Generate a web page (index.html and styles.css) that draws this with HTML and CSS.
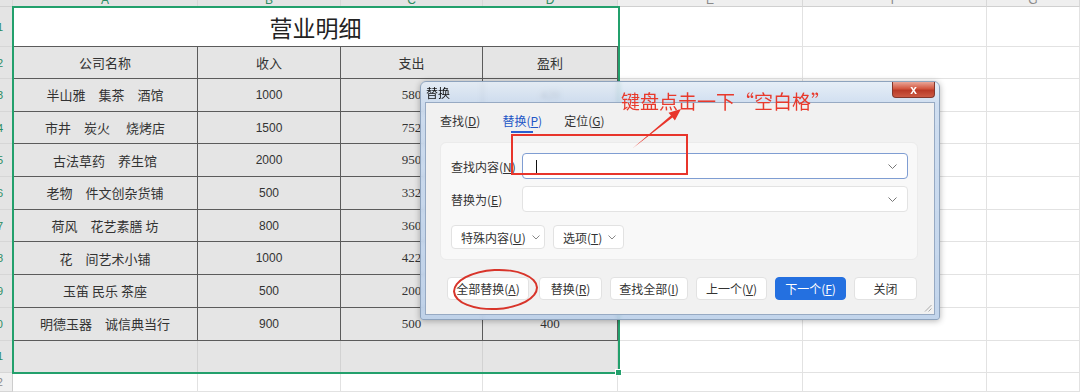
FILE: index.html
```html
<!DOCTYPE html>
<html lang="zh-CN">
<head>
    <meta charset="UTF-8">
    <title>营业明细 - 替换</title>
    <link rel="stylesheet" href="styles.css">
</head>
<body>
    <div class="sheet">
        <!-- column headers -->
        <div class="ch corner"></div>
        <div class="ch sel"><span>A</span></div>
        <div class="ch sel"><span>B</span></div>
        <div class="ch sel"><span>C</span></div>
        <div class="ch sel"><span>D</span></div>
        <div class="ch"><span>E</span></div>
        <div class="ch"><span>F</span></div>
        <div class="ch"><span>G</span></div>

        <!-- row 1 -->
        <div class="rh">1</div>
        <div class="title">营业明细</div>
        <div class="e"></div><div class="e"></div><div class="e"></div>

        <!-- row 2 -->
        <div class="rh">2</div>
        <div class="c">公司名称</div>
        <div class="c">收入</div>
        <div class="c">支出</div>
        <div class="c">盈利</div>
        <div class="e"></div><div class="e"></div><div class="e"></div>

        <div class="rh">3</div>
        <div class="c">半山雅　集茶　酒馆</div>
        <div class="c num">1000</div>
        <div class="c serif">580</div>
        <div class="c serif">420</div>
        <div class="e"></div><div class="e"></div><div class="e"></div>

        <div class="rh">4</div>
        <div class="c">市井　炭火　 烧烤店</div>
        <div class="c num">1500</div>
        <div class="c serif">752</div>
        <div class="c serif">748</div>
        <div class="e"></div><div class="e"></div><div class="e"></div>

        <div class="rh">5</div>
        <div class="c">古法草药　养生馆</div>
        <div class="c num">2000</div>
        <div class="c serif">950</div>
        <div class="c serif">1050</div>
        <div class="e"></div><div class="e"></div><div class="e"></div>

        <div class="rh">6</div>
        <div class="c">老物　件文创杂货铺</div>
        <div class="c num">500</div>
        <div class="c serif">332</div>
        <div class="c serif">168</div>
        <div class="e"></div><div class="e"></div><div class="e"></div>

        <div class="rh">7</div>
        <div class="c">荷风　花艺素膳 坊</div>
        <div class="c num">800</div>
        <div class="c serif">360</div>
        <div class="c serif">440</div>
        <div class="e"></div><div class="e"></div><div class="e"></div>

        <div class="rh">8</div>
        <div class="c">花　间艺术小铺</div>
        <div class="c num">1000</div>
        <div class="c serif">422</div>
        <div class="c serif">578</div>
        <div class="e"></div><div class="e"></div><div class="e"></div>

        <div class="rh">9</div>
        <div class="c">玉笛 民乐 茶座</div>
        <div class="c num">500</div>
        <div class="c serif">200</div>
        <div class="c serif">300</div>
        <div class="e"></div><div class="e"></div><div class="e"></div>

        <div class="rh">10</div>
        <div class="c">明德玉器　诚信典当行</div>
        <div class="c num">900</div>
        <div class="c serif">500</div>
        <div class="c serif">400</div>
        <div class="e"></div><div class="e"></div><div class="e"></div>

        <div class="rh">11</div>
        <div class="blank"></div><div class="blank"></div><div class="blank"></div><div class="blank"></div>
        <div class="e"></div><div class="e"></div><div class="e"></div>

        <div class="rh off">12</div>
        <div class="e"></div><div class="e"></div><div class="e"></div><div class="e"></div>
        <div class="e"></div><div class="e"></div><div class="e"></div>
    </div>

    <div class="selection"></div>

    <div class="dialog">
        <div class="dialog-title">替换</div>
        <div class="close">x</div>
        <div class="client">
            <div class="tabs">
                <div class="tab"><span>查找(<u>D</u>)</span></div>
                <div class="tab active"><span>替换(<u>P</u>)</span></div>
                <div class="tab"><span>定位(<u>G</u>)</span></div>
            </div>

            <div class="panel">
                <div class="field">
                    <label>查找内容(<u>N</u>)</label>
                    <div class="input focus">
                        <span class="caret"></span>
                        <svg class="chev" width="9" height="5" viewBox="0 0 9 5"><polyline points="0.5,0.5 4.5,4.5 8.5,0.5" fill="none" stroke="#777" stroke-width="1"/></svg>
                    </div>
                </div>
                <div class="field">
                    <label>替换为(<u>E</u>)</label>
                    <div class="input">
                        <span></span>
                        <svg class="chev" width="9" height="5" viewBox="0 0 9 5"><polyline points="0.5,0.5 4.5,4.5 8.5,0.5" fill="none" stroke="#777" stroke-width="1"/></svg>
                    </div>
                </div>
                <div class="options">
                    <div class="opt wide">
                        <span>特殊内容(<u>U</u>)</span>
                        <svg width="8" height="5" viewBox="0 0 8 5"><polyline points="0.5,0.5 4,4 7.5,0.5" fill="none" stroke="#888" stroke-width="1"/></svg>
                    </div>
                    <div class="opt">
                        <span>选项(<u>T</u>)</span>
                        <svg width="8" height="5" viewBox="0 0 8 5"><polyline points="0.5,0.5 4,4 7.5,0.5" fill="none" stroke="#888" stroke-width="1"/></svg>
                    </div>
                </div>
            </div>

            <div class="actions">
                <div class="btn all"><span>全部替换(<u>A</u>)</span></div>
                <div class="btn one"><span>替换(<u>R</u>)</span></div>
                <div class="btn find"><span>查找全部(<u>I</u>)</span></div>
                <div class="btn nav"><span>上一个(<u>V</u>)</span></div>
                <div class="btn nav primary"><span>下一个(<u>F</u>)</span></div>
                <div class="btn one"><span>关闭</span></div>
            </div>

            <svg class="grip" width="8" height="8" viewBox="0 0 8 8">
                <line x1="7.5" y1="1" x2="1" y2="7.5" stroke="#aaa"/>
                <line x1="7.5" y1="4.5" x2="4.5" y2="7.5" stroke="#aaa"/>
            </svg>
        </div>
    </div>

    <!-- red annotations -->
    <div class="note">键盘点击一下“空白格”</div>
    <div class="mark-box"></div>
    <div class="mark-ring"></div>
    <svg class="arrow" width="1080" height="392" viewBox="0 0 1080 392">
        <polygon points="633,148 670.9,115.6 668.5,112.7 681,109 674.9,120.5 672.5,117.6" fill="#e8352b"/>
    </svg>
</body>
</html>
```

FILE: styles.css
```css
* {
    margin: 0;
    padding: 0;
    box-sizing: border-box;
}

body {
    font-family: "Noto Sans CJK SC", "Noto Sans", sans-serif;
    background: #fff;
    color: #333;
    width: 1080px;
    height: 392px;
    overflow: hidden;
    position: relative;
}

u {
    text-decoration: underline;
    text-underline-offset: 1px;
}

/* spreadsheet */

.sheet {
    display: grid;
    grid-template-columns: 13px 185px 143px 142px 135px 185px 184px 1fr;
    grid-template-rows: 7px 40px 32px repeat(9, 32.7px) 1fr;
    height: 392px;
}

.ch {
    background: #efefef;
    border-right: 1px solid #d8d8d8;
    border-bottom: 1px solid #d0d0d0;
    overflow: hidden;
    text-align: center;
    font: 12px "Liberation Sans", sans-serif;
    color: #8a8a8a;
}

.ch span {
    display: block;
    line-height: 14px;
    margin-top: -7px;
}

.ch.sel {
    background: #e4e4e4;
    color: #2b8c62;
}

.ch.corner {
    background: #e4e4e4;
}

.rh {
    background: #e4e4e4;
    border-right: 1px solid #cdcdcd;
    border-bottom: 1px solid #d6d6d6;
    display: flex;
    align-items: center;
    justify-content: flex-end;
    padding-right: 9px;
    overflow: hidden;
    font: 11px "Liberation Sans", sans-serif;
    color: #2b8c62;
}

.rh.off {
    background: #efefef;
    color: #8a8a8a;
}

.title {
    grid-column: span 4;
    background: #fff;
    border-bottom: 1px solid #5b5b5b;
    display: flex;
    align-items: center;
    justify-content: center;
    font-size: 23px;
    color: #222;
}

.c {
    background: #e5e5e5;
    border-right: 1px solid #5b5b5b;
    border-bottom: 1px solid #5b5b5b;
    display: flex;
    align-items: center;
    justify-content: center;
    font-size: 13px;
    white-space: pre;
    color: #333;
}

.c.num {
    font: 12px "Liberation Sans", sans-serif;
}

.c.serif {
    font: 13px "Liberation Serif", serif;
}

.blank {
    background: #e5e5e5;
    border-right: 1px solid #d2d2d2;
}

.e {
    border-right: 1px solid #e2e2e2;
    border-bottom: 1px solid #e2e2e2;
}

.selection {
    position: absolute;
    left: 12px;
    top: 6px;
    width: 608px;
    height: 368px;
    border: 2px solid #23a06c;
    pointer-events: none;
}

.selection::after {
    content: "";
    position: absolute;
    right: -4px;
    bottom: -4px;
    width: 5px;
    height: 5px;
    background: #23a06c;
    border: 1px solid #fff;
}

/* replace dialog */

.dialog {
    position: absolute;
    left: 420px;
    top: 81px;
    width: 520px;
    height: 239px;
    display: flex;
    flex-direction: column;
    padding: 0 4px 4px 4px;
    border: 1px solid #8ea3bd;
    border-radius: 6px 6px 3px 3px;
    background: linear-gradient(180deg, rgba(226, 235, 245, 0.86), rgba(200, 217, 238, 0.86) 22px, rgba(186, 207, 233, 0.88));
    backdrop-filter: blur(2px);
    box-shadow: 0 1px 6px rgba(0, 0, 0, 0.3);
}

.dialog-title {
    height: 20px;
    display: flex;
    align-items: center;
    padding-left: 1px;
    font-size: 12px;
    color: #111;
}

.close {
    position: absolute;
    top: 0;
    right: 4px;
    width: 43px;
    height: 16px;
    border: 1px solid #83372c;
    border-top: none;
    border-radius: 0 0 4px 4px;
    background: linear-gradient(#e9a698, #d2563f 45%, #b93a27 55%, #cc5a44);
    color: #fff;
    font: bold 12px "Liberation Sans", sans-serif;
    display: flex;
    align-items: center;
    justify-content: center;
}

.client {
    flex: 1;
    position: relative;
    background: #f1f1f1;
    border: 1px solid #97aac3;
    display: flex;
    flex-direction: column;
}

.tabs {
    display: flex;
    gap: 22px;
    padding: 9px 0 0 14px;
    font-size: 12px;
}

.tab {
    display: flex;
    flex-direction: column;
    align-items: center;
    line-height: 18px;
    color: #333;
    white-space: nowrap;
}

.tab::after {
    content: "";
    width: 22px;
    height: 2px;
    margin-top: 1px;
}

.tab.active {
    color: #2356c6;
}

.tab.active::after {
    background: #2a5fd0;
}

.panel {
    margin: 9px 16px 0 14px;
    padding: 10px 9px 10px 10px;
    background: #f8f8f8;
    border: 1px solid #ebebeb;
    border-radius: 6px;
    display: flex;
    flex-direction: column;
    gap: 7px;
}

.field {
    display: flex;
    align-items: center;
}

.field label {
    width: 71px;
    white-space: nowrap;
    overflow: hidden;
    font-size: 12px;
}

.input {
    width: 386px;
    height: 26px;
    background: #fff;
    border: 1px solid #e3e3e3;
    border-radius: 4px;
    display: flex;
    align-items: center;
    justify-content: space-between;
    padding: 0 10px 0 13px;
}

.input.focus {
    border-color: #7f9dd2;
}

.caret {
    width: 1px;
    height: 13px;
    background: #111;
}

.options {
    display: flex;
    gap: 8px;
    margin-top: 6px;
}

.opt {
    width: 71px;
    height: 24px;
    background: #fff;
    border: 1px solid #e2e2e2;
    border-radius: 4px;
    display: flex;
    align-items: center;
    gap: 6px;
    padding-left: 9px;
    font-size: 12px;
    white-space: nowrap;
}

.opt.wide {
    width: 94px;
}

.actions {
    display: flex;
    gap: 8px;
    margin-top: 17px;
    padding-left: 21px;
}

.btn {
    height: 23px;
    background: #fff;
    border: 1px solid #e2e2e2;
    border-radius: 4px;
    display: flex;
    align-items: center;
    justify-content: center;
    font-size: 12px;
    color: #333;
    white-space: nowrap;
}

.btn.all {
    width: 82px;
    margin-right: 2px;
}

.btn.one {
    width: 63px;
}

.btn.find {
    width: 78px;
}

.btn.nav {
    width: 71px;
}

.btn.primary {
    background: #2470e0;
    border-color: #2470e0;
    color: #fff;
}

.grip {
    position: absolute;
    right: 2px;
    bottom: 2px;
}

/* red annotations */

.note {
    position: absolute;
    left: 621px;
    top: 89px;
    font-size: 19px;
    line-height: 24px;
    color: #e8392c;
    white-space: nowrap;
}

.mark-box {
    position: absolute;
    left: 511px;
    top: 134px;
    width: 177px;
    height: 41px;
    border: 2px solid #e8352b;
}

.mark-ring {
    position: absolute;
    left: 453px;
    top: 269px;
    width: 85px;
    height: 41px;
    border: 2px solid #d8342a;
    border-radius: 50%;
    transform: rotate(-3deg);
}

.arrow {
    position: absolute;
    left: 0;
    top: 0;
    pointer-events: none;
}
```
